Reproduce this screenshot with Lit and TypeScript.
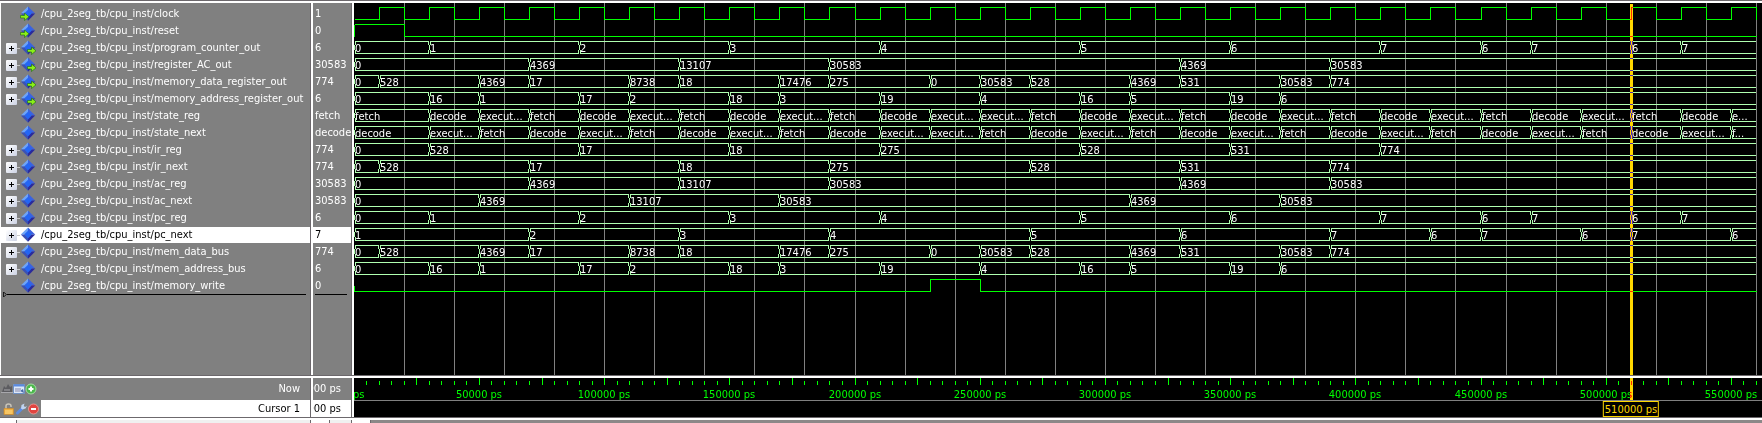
import { LitElement, html, svg, css, nothing } from "lit";
import { customElement, property, state } from "lit/decorators.js";
import { classMap } from "lit/directives/class-map.js";
import { styleMap } from "lit/directives/style-map.js";

type Step = [number, string];
type Level = [number, 0 | 1];

interface Signal {
  name: string;
  value: string;
  port?: "in" | "out";
  bus?: Step[];
  bit?: Level[];
}

const END = 560;
const CURSOR = 510;
const PX_PER_NS = 2.504;

/** Pixel column of a time given in nanoseconds. */
const col = (ns: number) => Math.floor(ns * PX_PER_NS + 0.2);

const range = (from: number, to: number, step: number) => {
  const out: number[] = [];
  for (let v = from; v <= to; v += step) out.push(v);
  return out;
};

const steps = (text: string): Step[] =>
  text.split(" ").map((s) => {
    const [t, v] = s.split(":");
    return [Number(t), v];
  });

const clock: Level[] = range(0, END, 10).map((t, i) => [t, (i % 2) as 0 | 1]);
const pc = steps("0:0 30:1 90:2 150:3 210:4 290:5 350:6 410:7 450:6 470:7 510:6 530:7");
const pcNext = steps("0:1 70:2 130:3 190:4 270:5 330:6 390:7 430:6 450:7 490:6 510:7 550:6");
const ac = steps("0:0 70:4369 130:13107 190:30583 330:4369 390:30583");
const acNext = steps("0:0 50:4369 110:13107 170:30583 310:4369 370:30583");
const ir = steps("0:0 30:528 90:17 150:18 210:275 290:528 350:531 410:774");
const irNext = steps("0:0 10:528 70:17 130:18 190:275 270:528 330:531 390:774");
const data = steps(
  "0:0 10:528 50:4369 70:17 110:8738 130:18 170:17476 190:275 230:0 250:30583 270:528 310:4369 330:531 370:30583 390:774",
);
const address = steps("0:0 30:16 50:1 90:17 110:2 150:18 170:3 210:19 250:4 290:16 310:5 350:19 370:6");

const F = "fetch";
const D = "decode";
const X = "execut...";
const phases = [F, D, X, F, D, X, F, D, X, F, D, X, X, F, D, X, F, D, X, F, D, X, F, D, X, F, D, "e..."];
const phaseTimes = [0, ...range(30, 550, 20)];
const stateReg: Step[] = phases.map((p, i) => [phaseTimes[i], p]);
const stateNext: Step[] = phases.map((_, i) => [phaseTimes[i], phases[i + 1] ?? "f..."]);
stateNext[26] = [530, X];

const signals: Signal[] = [
  { name: "clock", value: "1", port: "in", bit: clock },
  { name: "reset", value: "0", port: "in", bit: [[0, 1], [20, 0]] },
  { name: "program_counter_out", value: "6", port: "out", bus: pc },
  { name: "register_AC_out", value: "30583", port: "out", bus: ac },
  { name: "memory_data_register_out", value: "774", port: "out", bus: data },
  { name: "memory_address_register_out", value: "6", port: "out", bus: address },
  { name: "state_reg", value: "fetch", bus: stateReg },
  { name: "state_next", value: "decode", bus: stateNext },
  { name: "ir_reg", value: "774", bus: ir },
  { name: "ir_next", value: "774", bus: irNext },
  { name: "ac_reg", value: "30583", bus: ac },
  { name: "ac_next", value: "30583", bus: acNext },
  { name: "pc_reg", value: "6", bus: pc },
  { name: "pc_next", value: "7", bus: pcNext },
  { name: "mem_data_bus", value: "774", bus: data },
  { name: "mem_address_bus", value: "6", bus: address },
  { name: "memory_write", value: "0", bit: [[0, 0], [230, 1], [250, 0]] },
];

const hasChildren = (s: Signal) => !!s.bus && !s.name.startsWith("state");

@customElement("wave-lane")
class WaveLane extends LitElement {
  @property({ attribute: false }) signal!: Signal;

  static styles = css`
    :host { display: grid; grid-template-columns: minmax(0, 1fr); height: 17px; overflow: hidden; }
    svg, .labels { grid-area: 1 / 1; }
    svg { display: block; width: 100%; height: 17px; fill: none; shape-rendering: crispEdges; }
    .bus { stroke: #b0ffb0; }
    .bit { stroke: #00ff00; }
    .labels { display: flex; line-height: 17px; color: #fff; }
    .label { flex: none; box-sizing: border-box; padding-left: 1px; white-space: nowrap; }
  `;

  private busPath(list: Step[]) {
    return list
      .map(([t], i) => {
        const a = col(t);
        const last = i === list.length - 1;
        const b = col(last ? END : list[i + 1][0]);
        const open = `M${a + 1.5} 1V5M${a + 0.5} 5V10M${a + 1.5} 10V14`;
        const close = last ? "" : `M${b - 0.5} 1V5M${b - 0.5} 10V14`;
        return `M${a + 1} 1.5H${b}M${a + 1} 13.5H${b}${open}${close}`;
      })
      .join("");
  }

  private bitPath(list: Level[]) {
    let d = "";
    list.forEach(([t, v], i) => {
      const a = col(t);
      const b = col(i === list.length - 1 ? END : list[i + 1][0]);
      const y = v ? 1.5 : 13.5;
      if (i > 0) d += `M${a + 0.5} 1V14`;
      else if (list !== clock) d += v ? `M${a + 0.5} 2V14` : `M${a + 0.5} 8V14`;
      d += `M${a + (i ? 0 : 1)} ${y}H${b + 1}`;
    });
    return d;
  }

  render() {
    const { bus, bit } = this.signal;
    return html`
      <svg aria-hidden="true">
        ${bus ? svg`<path class="bus" d=${this.busPath(bus)} />` : nothing}
        ${bit ? svg`<path class="bit" d=${this.bitPath(bit)} />` : nothing}
      </svg>
      ${bus
        ? html`<div class="labels">
            ${bus.map(([t, v], i) => {
              const end = i === bus.length - 1 ? END : bus[i + 1][0];
              return html`<span class="label" style=${styleMap({ width: `${col(end) - col(t)}px` })}>${v}</span>`;
            })}
          </div>`
        : nothing}
    `;
  }
}

@customElement("signal-icon")
class SignalIcon extends LitElement {
  @property() port?: "in" | "out";

  static styles = css`
    :host { display: block; width: 17px; height: 16px; }
    svg { display: block; }
  `;

  render() {
    const arrow = "M0 3.5H4V1L8.5 4.8 4 8.5V6H0Z";
    return html`<svg width="17" height="16" viewBox="0 0 17 16" aria-hidden="true">
      <path d="M8 0.5L8 7.5H0.8Z" fill="#6ea4f8" />
      <path d="M8 0.5L15.2 7.5H8Z" fill="#3a62e0" />
      <path d="M0.8 7.5H8V14.8Z" fill="#3c52b4" />
      <path d="M15.2 7.5H8V14.8Z" fill="#2a2a9c" />
      <path d="M8 3.8L11.8 7.6 8 11.4 4.2 7.6Z" fill="#2466f4" />
      ${this.port === "in"
        ? svg`<path d=${arrow} transform="translate(.5 6)" fill="#8cf018" stroke="#176a10" stroke-width=".6" />`
        : nothing}
      ${this.port === "out"
        ? svg`<path d=${arrow} transform="translate(7.5 6)" fill="#8cf018" stroke="#176a10" stroke-width=".6" />`
        : nothing}
    </svg>`;
  }
}

@customElement("app-root")
class AppRoot extends LitElement {
  @state() private selected = "pc_next";

  static styles = css`
    :host {
      display: grid;
      grid-template-columns: 313px 41px minmax(0, 1fr);
      grid-template-rows: 3px minmax(0, 1fr) 3px 39px 3px 3px;
      height: 100vh;
      background: #fff;
      color: #fff;
      font-family: "DejaVu Sans Condensed", "DejaVu Sans", sans-serif;
      font-size: 11px;
      overflow: hidden;
    }
    .rule { grid-column: 1 / -1; border-top: 1px solid #6c686c; background: #fff; }
    .pane { border-right: 1px solid #6c686c; margin-right: 2px; background: #808080; overflow: hidden; }
    .names { margin-left: 1px; }
    .list { padding-top: 3px; }
    .row { display: flex; height: 16px; margin-bottom: 1px; line-height: 15px; white-space: nowrap; cursor: default; }
    .row.selected { background: #fff; color: #000; }
    .tree { display: flex; align-items: center; flex: none; width: 19px; padding-left: 5px; box-sizing: border-box; }
    .tree::after { content: ""; flex: 1; height: 1px; background: #c8c8c8; }
    .tree.leaf::after { display: none; }
    .expand {
      display: block; flex: none; width: 11px; height: 11px; padding: 0; border: 0; margin-top: 1px;
      border-radius: 1px; background: linear-gradient(135deg, #fff, #ccd2e4);
    }
    .expand svg, .tool svg { display: block; }
    .path { padding-left: 4px; }
    .value { padding-left: 2px; }
    .insert { display: flex; align-items: center; height: 5px; margin: -3px 4px 0 2px; }
    .insert::after { content: ""; flex: 1; height: 1px; background: #000; }

    .canvas { position: relative; background: #000; display: grid; grid-template-columns: minmax(0, 1fr); overflow: hidden; }
    .grid, .lanes { grid-area: 1 / 1; }
    .grid { width: 100%; height: 100%; stroke: #808080; shape-rendering: crispEdges; }
    .lanes { padding-top: 3px; }
    .cursor { position: absolute; top: 1px; bottom: 0; width: 3px; background: #ffd700; mix-blend-mode: difference; }

    .foot { background: #808080; border-right: 1px solid #6c686c; margin-right: 2px; overflow: hidden; }
    .now { display: flex; height: 22px; line-height: 22px; }
    .mark { display: flex; height: 17px; line-height: 18px; }
    .caption { flex: 1; display: flex; justify-content: flex-end; padding-right: 10px; white-space: nowrap; min-width: 0; }
    .mark .caption { background: #fff; color: #000; }
    .tools { display: flex; align-items: center; flex: none; box-sizing: border-box; width: 41px; padding-left: 1px; }
    .mark .tools { padding-left: 3px; }
    .tool { display: block; padding: 0; border: 0; background: none; width: 12px; height: 12px; }

    .ruler { position: relative; background: #000; overflow: hidden; }
    .scale { display: block; width: 100%; height: 22px; border-bottom: 1px solid #808080; overflow: hidden; }
    .scale path { stroke: #00ff00; shape-rendering: crispEdges; }
    .scale text { fill: #00ff00; text-anchor: middle; }
    .ruler .cursor { top: 0; bottom: 17px; }
    .flag {
      position: absolute; bottom: 0; transform: translateX(-50%); box-sizing: border-box; height: 16px; padding: 0 1px;
      border: 1px solid #ffd700; background: #000; color: #ffd700; line-height: 15px; white-space: nowrap;
    }
    .scroll { display: flex; background: #f0f0f0; border-right: 1px solid #6c686c; margin-right: 2px; }
    .scroll::before { content: ""; width: 16px; border-right: 1px solid #6c686c; background: #fff; }
    .scroll.thumb { background: #8c8888; border: 0; margin: 0; }
  `;

  private plus = html`<svg width="11" height="11" viewBox="0 0 11 11" aria-hidden="true">
    <path d="M5.5 3V8M3 5.5H8" stroke="#000" shape-rendering="crispEdges" />
  </svg>`;

  private tools = {
    now: [
      ["Add objects", svg`<path d="M1 9L3 3 5 5 7 1 9 4 11 3V9Z" fill="#5c5c60" /><path d="M0 9.5H12M3 7H9" stroke="#a8a8ac" fill="none" />`],
      ["Properties", svg`<path d="M.5 1.5H11.5V10.5H.5Z" fill="#dce8f8" stroke="#6f90c4" /><path d="M1 2.5H11" stroke="#5a8ae0" stroke-width="2" /><path d="M2 6H8M2 8H7" stroke="#88a" /><path d="M7 8L10 6 11 10Z" fill="#4a6aa8" />`],
      ["Add cursor", svg`<circle cx="6" cy="6" r="5" fill="#4cb84c" stroke="#a4dca4" /><path d="M6 3.5V8.5M3.5 6H8.5" stroke="#fff" stroke-width="2" />`],
    ],
    mark: [
      ["Lock cursor", svg`<path d="M3 6V3Q3 1 5.5 1T8 3V4" fill="none" stroke="#c8c4b8" stroke-width="1.5" /><path d="M1 5.5H10.5V11.5H1Z" fill="#f0b040" stroke="#d08c28" stroke-width=".6" /><path d="M2 8H9.5M2 10H9.5" stroke="#ffdc88" />`],
      ["Edit cursor", svg`<path d="M2.5 10L7.5 5" stroke="#5c8ce0" stroke-width="3" stroke-linecap="round" /><path d="M6 5.5L6.5 2 9.5 .5 8.8 3 10 4 12 3 10.5 5.5 7.5 6.5Z" fill="#c0d4f0" />`],
      ["Remove cursor", svg`<circle cx="6.5" cy="6" r="5" fill="#e04440" stroke="#f0a09c" stroke-width=".8" /><path d="M4 6H9" stroke="#fff" stroke-width="2" />`],
    ],
  } as const;

  private renderTools(kind: "now" | "mark") {
    return html`<div class="tools">
      ${this.tools[kind].map(
        ([label, art]) => html`<button class="tool" aria-label=${label}>
          <svg width="12" height="12" viewBox="0 0 12 12" aria-hidden="true">${art}</svg>
        </button>`,
      )}
    </div>`;
  }

  private rowClass(s: Signal) {
    return classMap({ row: true, selected: s.name === this.selected });
  }

  render() {
    const pick = (s: Signal) => () => (this.selected = s.name);
    const cursorLeft = styleMap({ left: `${col(CURSOR) - 1}px` });
    const ticks = range(5, END, 5)
      .map((t) => `M${col(t) + 0.5} ${t % 25 ? 3 : 0}V7`)
      .join("");
    const marker = svg`<path d="M.5 0V5L3.5 2.5Z" fill="none" stroke="#000" stroke-width=".8" />`;

    return html`
      <div class="rule"></div>
      <div class="pane names">
        <div class="list">
          ${signals.map(
            (s) => html`<div class=${this.rowClass(s)} @click=${pick(s)}>
              <div class=${classMap({ tree: true, leaf: !hasChildren(s) })}>
                ${hasChildren(s)
                  ? html`<button class="expand" aria-label="Expand ${s.name}">${this.plus}</button>`
                  : nothing}
              </div>
              <signal-icon .port=${s.port}></signal-icon>
              <span class="path">/cpu_2seg_tb/cpu_inst/${s.name}</span>
            </div>`,
          )}
        </div>
        <div class="insert"><svg width="4" height="5" aria-hidden="true">${marker}</svg></div>
      </div>
      <div class="pane">
        <div class="list">
          ${signals.map((s) => html`<div class=${this.rowClass(s)} @click=${pick(s)}><span class="value">${s.value}</span></div>`)}
        </div>
        <div class="insert"></div>
      </div>
      <div class="canvas">
        <svg class="grid" aria-hidden="true">
          ${range(20, END, 20).map((t) => svg`<line x1=${col(t) + 0.5} x2=${col(t) + 0.5} y1="0" y2="100%" />`)}
        </svg>
        <div class="lanes">${signals.map((s) => html`<wave-lane .signal=${s}></wave-lane>`)}</div>
        <div class="cursor" style=${cursorLeft}></div>
      </div>

      <div class="rule"></div>
      <div class="foot">
        <div class="now">${this.renderTools("now")}<span class="caption">Now</span></div>
        <div class="mark">${this.renderTools("mark")}<span class="caption">Cursor 1</span></div>
      </div>
      <div class="foot">
        <div class="now"><span class="caption">000 ps</span></div>
        <div class="mark"><span class="caption">000 ps</span></div>
      </div>
      <div class="ruler">
        <svg class="scale">
          <path d=${ticks} />
          ${range(0, 550, 50).map((t) => svg`<text x=${col(t)} y="20">${t * 1000} ps</text>`)}
        </svg>
        <div class="cursor" style=${cursorLeft}></div>
        <div class="flag" style=${styleMap({ left: `${col(CURSOR)}px` })}>${CURSOR * 1000} ps</div>
      </div>

      <div class="rule"></div>
      <div class="scroll"></div>
      <div class="scroll"></div>
      <div class="scroll thumb"></div>
    `;
  }
}
